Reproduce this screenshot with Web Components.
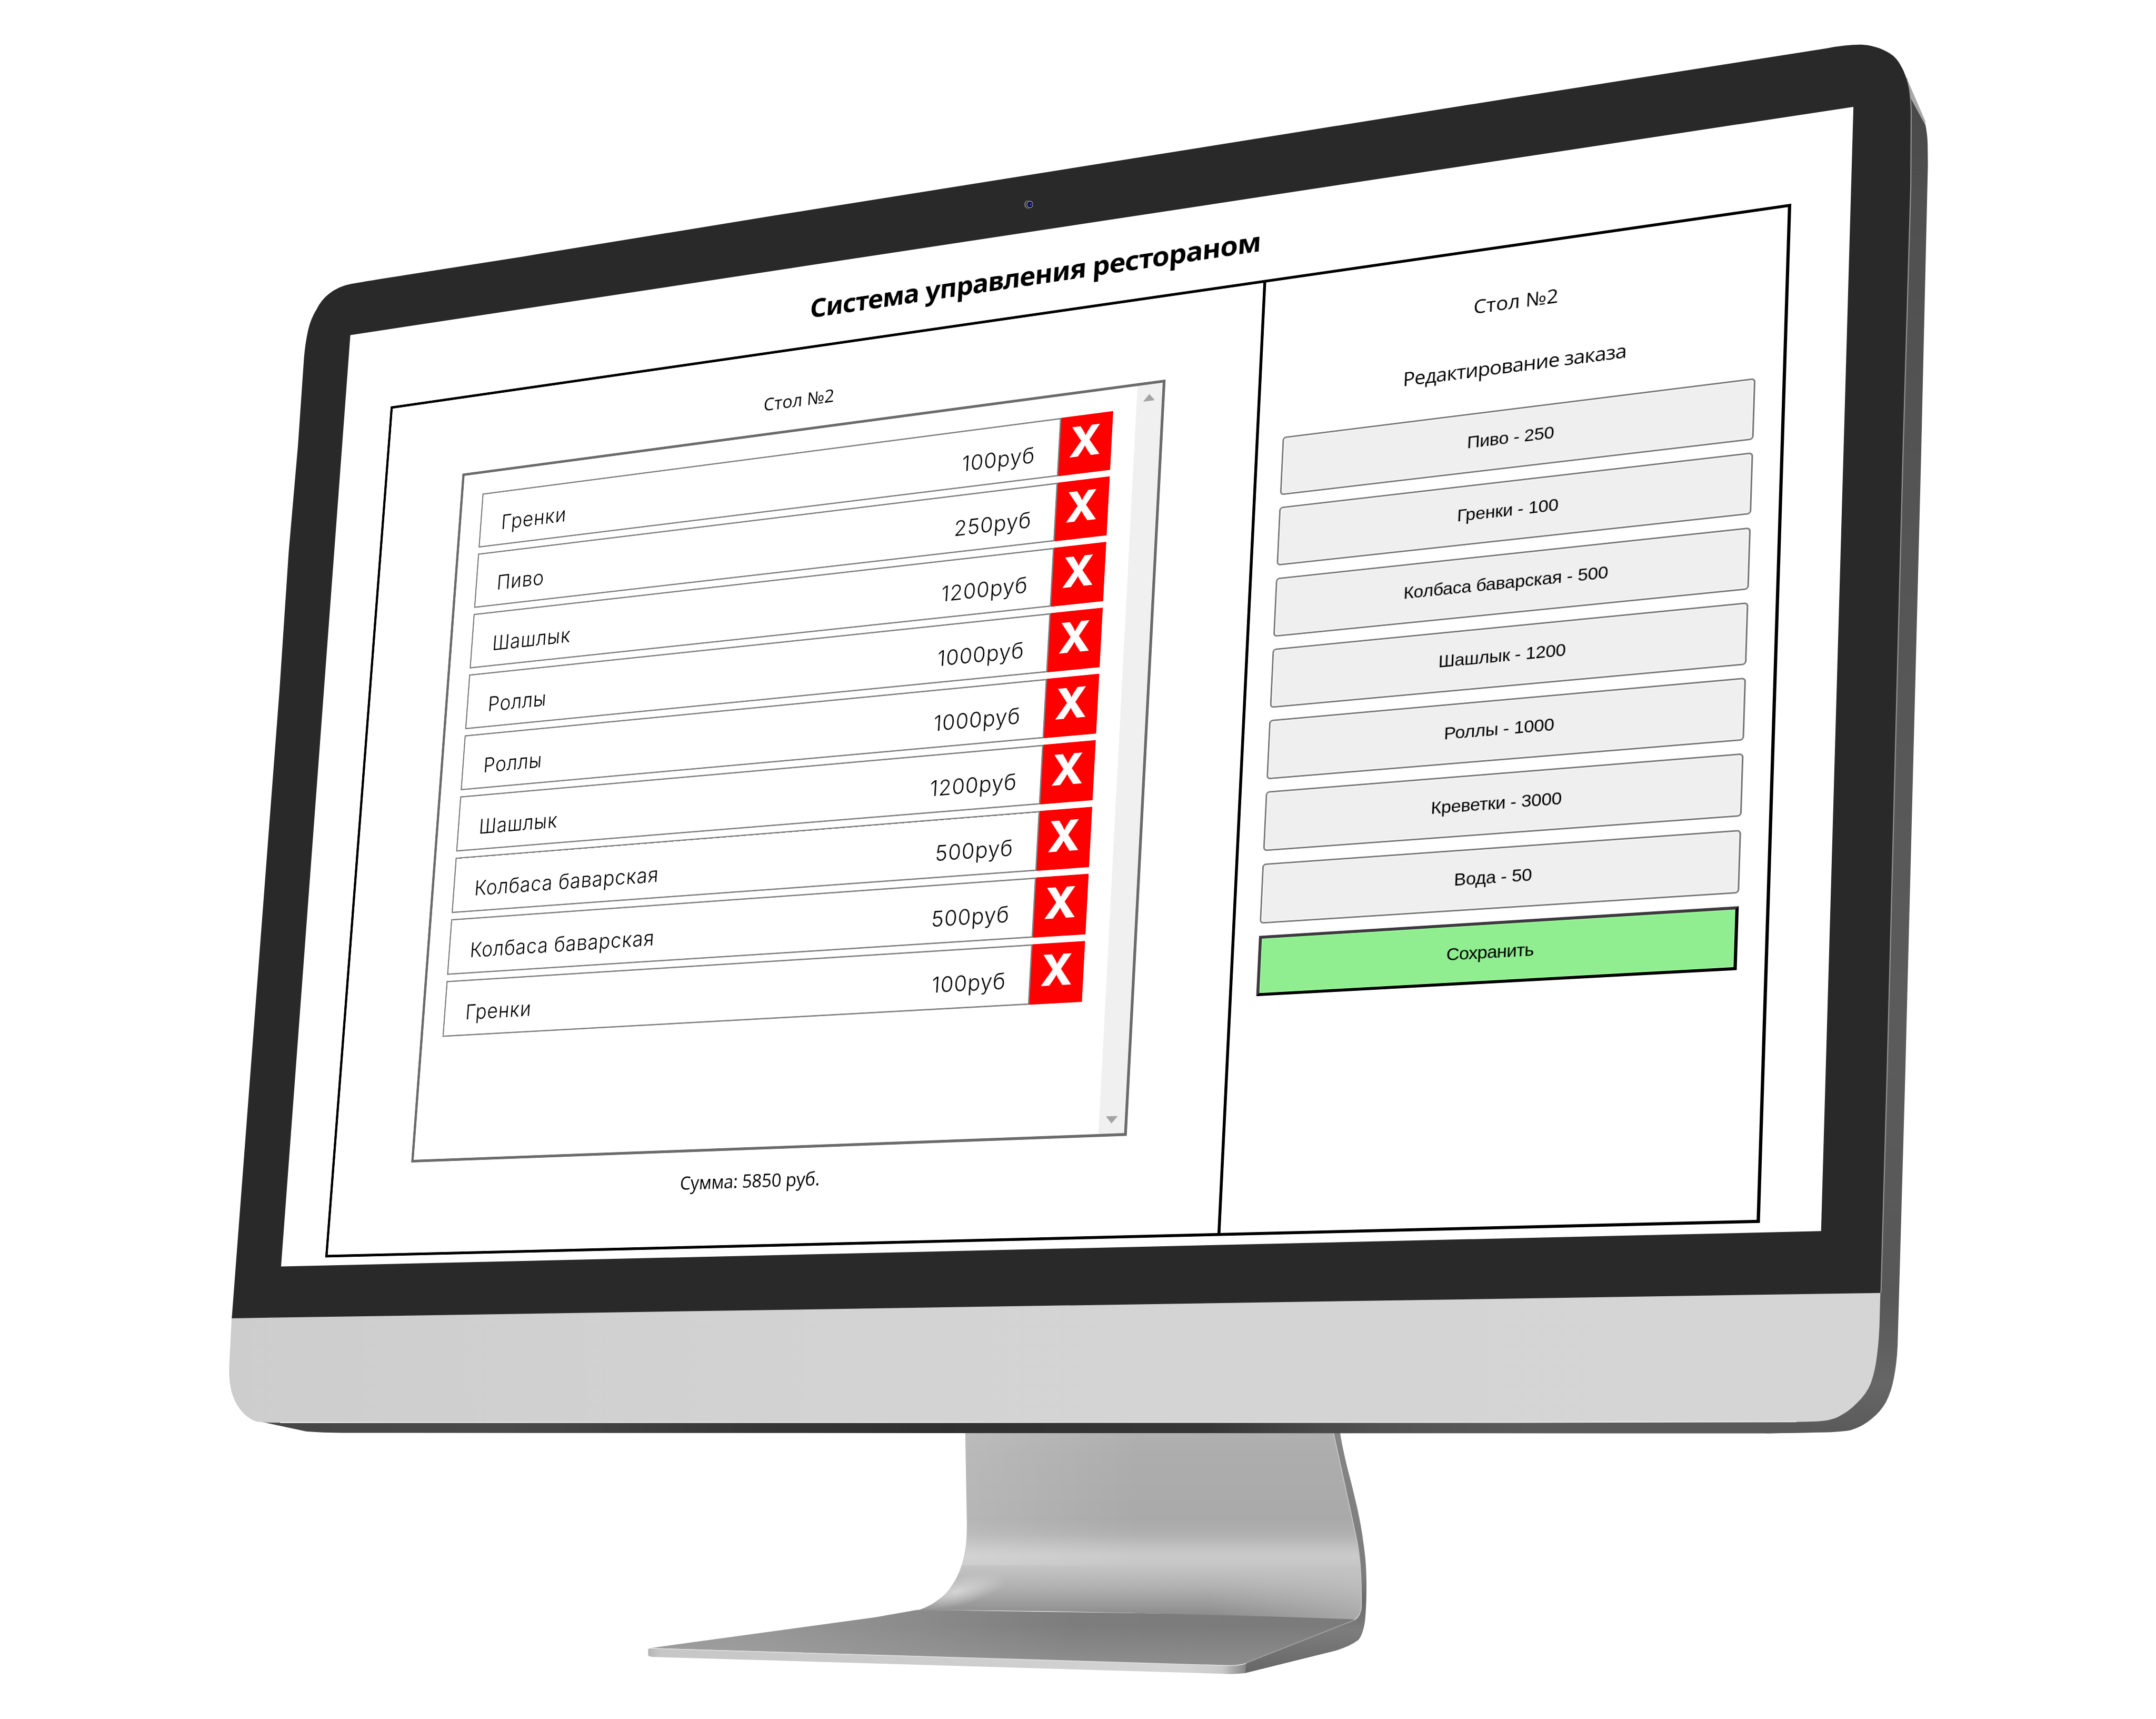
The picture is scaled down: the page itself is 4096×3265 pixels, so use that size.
<!DOCTYPE html>
<html lang="ru">
<head>
<meta charset="utf-8">
<title>Система управления рестораном</title>
<style>
  html, body { margin: 0; background: #fff; }
  body { width: 4096px; height: 3265px; overflow: hidden; }
</style>
</head>
<body>
<monitor-scene>
  <monitor-device slot="device"></monitor-device>
  <perspective-plane slot="screen">
    <restaurant-app heading="Система управления рестораном">
      <order-panel slot="main" heading="Стол №2" total="Сумма: 5850 руб.">
        <order-row price="100руб">Гренки</order-row>
        <order-row price="250руб">Пиво</order-row>
        <order-row price="1200руб">Шашлык</order-row>
        <order-row price="1000руб">Роллы</order-row>
        <order-row price="1000руб">Роллы</order-row>
        <order-row price="1200руб">Шашлык</order-row>
        <order-row price="500руб">Колбаса баварская</order-row>
        <order-row price="500руб">Колбаса баварская</order-row>
        <order-row price="100руб">Гренки</order-row>
      </order-panel>
      <edit-panel slot="side" heading="Стол №2" subheading="Редактирование заказа">
        <menu-button>Пиво - 250</menu-button>
        <menu-button>Гренки - 100</menu-button>
        <menu-button>Колбаса баварская - 500</menu-button>
        <menu-button>Шашлык - 1200</menu-button>
        <menu-button>Роллы - 1000</menu-button>
        <menu-button>Креветки - 3000</menu-button>
        <menu-button>Вода - 50</menu-button>
        <menu-button primary>Сохранить</menu-button>
      </edit-panel>
    </restaurant-app>
  </perspective-plane>
</monitor-scene>

<script>
class Base extends HTMLElement {
  constructor() {
    super();
    this.attachShadow({ mode: 'open' }).innerHTML = this.view();
  }
  attr(name) { return this.getAttribute(name) || ''; }
}

customElements.define('monitor-scene', class extends Base {
  view() {
    return `<style>
      :host { display: grid; width: 4096px; height: 3265px; overflow: hidden; }
      ::slotted(*) { grid-area: 1 / 1; place-self: start; }
    </style><slot name="device"></slot><slot name="screen"></slot>`;
  }
});

customElements.define('monitor-device', class extends Base {
  view() {
    return `<style>
      :host { display: block; width: 4096px; height: 3265px; }
      svg { display: block; width: 100%; height: 100%; }
    </style>
    <svg viewBox="0 0 5000 3986" preserveAspectRatio="none" aria-hidden="true">
      <defs>
        <linearGradient id="neck" gradientUnits="userSpaceOnUse" x1="0" y1="3324" x2="0" y2="3765">
          <stop offset="0" stop-color="#b0b0b0"/><stop offset=".1" stop-color="#adadad"/>
          <stop offset=".45" stop-color="#a9a9a9"/><stop offset=".53" stop-color="#b0b0b0"/>
          <stop offset=".6" stop-color="#c2c2c2"/><stop offset=".645" stop-color="#cacaca"/>
          <stop offset=".69" stop-color="#c6c6c6"/><stop offset=".8" stop-color="#b2b2b2"/>
          <stop offset=".88" stop-color="#9f9f9f"/><stop offset=".93" stop-color="#929292"/><stop offset="1" stop-color="#858585"/>
        </linearGradient>
        <linearGradient id="neckLight" gradientUnits="userSpaceOnUse" x1="2238" y1="0" x2="2640" y2="0">
          <stop offset="0" stop-color="#fff" stop-opacity=".15"/><stop offset="1" stop-color="#fff" stop-opacity="0"/>
        </linearGradient>
        <linearGradient id="neckRight" gradientUnits="userSpaceOnUse" x1="2800" y1="3700" x2="3160" y2="3690">
          <stop offset="0" stop-color="#c4c4c4" stop-opacity="0"/><stop offset="1" stop-color="#c4c4c4" stop-opacity=".55"/>
        </linearGradient>
        <linearGradient id="foot" gradientUnits="userSpaceOnUse" x1="1700" y1="3800" x2="2900" y2="3770">
          <stop offset="0" stop-color="#989898"/><stop offset=".35" stop-color="#8b8b8b"/>
          <stop offset=".65" stop-color="#7d7d7d"/><stop offset="1" stop-color="#7b7b7b"/>
        </linearGradient>
        <linearGradient id="footLight" gradientUnits="userSpaceOnUse" x1="0" y1="3770" x2="0" y2="3865">
          <stop offset="0" stop-color="#aaa" stop-opacity="0"/><stop offset="1" stop-color="#aaa" stop-opacity=".4"/>
        </linearGradient>
        <radialGradient id="glow" gradientUnits="userSpaceOnUse" cx="0" cy="0" r="1" gradientTransform="translate(2220 3690) rotate(-14) scale(115 34)">
          <stop offset="0" stop-color="#dcdcdc" stop-opacity=".85"/><stop offset="1" stop-color="#dcdcdc" stop-opacity="0"/>
        </radialGradient>
        <linearGradient id="strip" gradientUnits="userSpaceOnUse" x1="0" y1="3324" x2="0" y2="3880">
          <stop offset="0" stop-color="#858585"/><stop offset=".6" stop-color="#7c7c7c"/>
          <stop offset=".7" stop-color="#6a6a6a"/><stop offset=".82" stop-color="#7d7d7d"/><stop offset="1" stop-color="#666"/>
        </linearGradient>
        <linearGradient id="footEdge" gradientUnits="userSpaceOnUse" x1="1503" y1="0" x2="2890" y2="0">
          <stop offset="0" stop-color="#b5b5b5"/><stop offset=".02" stop-color="#c6c6c6"/>
          <stop offset=".9" stop-color="#d3d3d3"/><stop offset=".96" stop-color="#c9c9c9"/><stop offset="1" stop-color="#858585"/>
        </linearGradient>
        <linearGradient id="under" gradientUnits="userSpaceOnUse" x1="600" y1="0" x2="4400" y2="0">
          <stop offset="0" stop-color="#454545"/><stop offset=".15" stop-color="#494949"/>
          <stop offset=".3" stop-color="#363636"/><stop offset=".42" stop-color="#303030"/>
          <stop offset=".58" stop-color="#363636"/><stop offset=".68" stop-color="#515151"/><stop offset=".78" stop-color="#5a5a5a"/>
          <stop offset="1" stop-color="#5a5a5a"/>
        </linearGradient>
        <linearGradient id="side" gradientUnits="userSpaceOnUse" x1="0" y1="180" x2="0" y2="3320">
          <stop offset="0" stop-color="#474747"/><stop offset=".1" stop-color="#505050"/>
          <stop offset=".7" stop-color="#5b5b5b"/><stop offset=".9" stop-color="#575757"/>
          <stop offset=".965" stop-color="#666"/><stop offset="1" stop-color="#5a5a5a"/>
        </linearGradient>
        <linearGradient id="chin" gradientUnits="userSpaceOnUse" x1="532" y1="3200" x2="4360" y2="3100">
          <stop offset="0" stop-color="#cdcdcd"/><stop offset=".4" stop-color="#d3d3d3"/><stop offset="1" stop-color="#d5d5d5"/>
        </linearGradient>
      </defs>

      <!-- stand -->
      <path fill="url(#strip)" d="M3080 3318 L3107 3318 C3118 3385 3130 3420 3142 3473 C3151 3510 3157 3540 3161 3571 C3167 3610 3169 3640 3169 3674 Q3169 3730 3165 3763 Q3160 3792 3150 3803 Q3130 3818 3096 3828 L2888 3879.4 L2850 3870 Z"/>
      <path fill="url(#foot)" d="M1509 3821.4 L2030 3750 L2127 3733 L3148 3748 Q3142 3760 3115 3768 L2890 3856 Q2875 3863 2842 3862 Z"/>
      <path fill="url(#footLight)" d="M1509 3821.4 L2030 3750 L2127 3733 L3148 3748 Q3142 3760 3115 3768 L2890 3856 Q2875 3863 2842 3862 Z"/>
      <path fill="url(#neck)" d="M2238.5 3318 L2242 3518 Q2243 3560 2239.7 3585 Q2236 3610 2230 3629.5 Q2221 3658 2206 3678.6 Q2194 3698 2175.5 3709.8 Q2155 3726 2127 3734.4 C2400 3733 2750 3742 3146 3755 Q3156 3745 3157 3727.7 Q3158 3680 3154.6 3629.5 Q3151 3590 3144.8 3562.5 L3091.5 3318 Z"/>
      <path fill="url(#neckLight)" d="M2238.5 3318 L2242 3518 Q2243 3560 2239.7 3585 Q2236 3610 2230 3629.5 L2700 3630 L2700 3318 Z"/>
      <path fill="url(#neckRight)" d="M2750 3640 L3155 3640 Q3158 3690 3157 3727.7 Q3156 3745 3146 3755 L2750 3741 Z"/>
      <path fill="url(#glow)" d="M2243 3600 Q2236 3610 2230 3629.5 Q2221 3658 2206 3678.6 Q2194 3698 2175.5 3709.8 Q2155 3726 2127 3734.4 L2400 3733 L2400 3600 Z"/>
      <path fill="none" stroke="#c9c9c9" stroke-width="2" d="M3091.5 3318 L3144.8 3562.5 Q3151 3590 3154.6 3629.5 Q3158 3680 3157 3727.7 Q3156 3745 3140 3757"/>
      <path fill="none" stroke="#a5a5a5" stroke-width="2" d="M3140 3757 L2890 3856"/>
      <path fill="url(#footEdge)" d="M1503 3824 Q1506 3820 1530 3823 L2842 3862 Q2875 3863 2890 3857 L2888 3879.4 Q2860 3883 2820 3880.6 L1521 3842.4 Q1503 3842 1503 3838 Z"/>
      <path fill="none" stroke="#dedede" stroke-width="2" d="M1509 3822 L1530 3823 L2842 3862 Q2875 3863 2890 3857"/>

      <!-- side of the housing -->
      <path fill="url(#side)" d="M4418 175 L4464.6 286 Q4470 310 4470.5 337 L4471 382 L4455.5 1050 L4418.3 2500 L4400.8 3120 Q4399 3160 4392.3 3194.5 Q4387 3225 4373.4 3251.9 Q4362 3272 4341.8 3289 Q4320 3308 4292.7 3316.2 Q4275 3320 4236.6 3321.4 L4096 3323.7 L4096 3200 L4300 1000 Z"/>
      <path fill="#a9a9a9" d="M4418 172 L4464.6 280 L4466 292 L4428 222 Z"/>
      <path fill="url(#under)" d="M590 3290 L607 3297 L709.8 3319 Q740 3322 812.5 3322.5 L4096 3323.7 L4200 3322 L4200 3250 L620 3250 Z"/>

      <!-- front -->
      <path fill="url(#chin)" d="M537.5 3050 L532.5 3148.6 Q530.5 3180 532 3194.5 Q533 3215 539.3 3234.7 Q547 3258 562.5 3274.9 Q578 3291 593.7 3296 Q605 3298.8 650 3299 L3500 3298.4 L4166 3297 Q4210 3297 4229.6 3294.4 Q4245 3293 4261 3286.4 Q4287 3274 4306.8 3253 Q4328 3233 4338 3208.9 Q4348 3182 4352.3 3148.6 Q4357 3115 4358.7 3074 L4361 2990 Z"/>
      <path fill="none" stroke="#ececec" stroke-width="2.5" d="M650 3298.5 L3500 3298 L4166 3296.5"/>
      <path fill="none" stroke="#8f8f8f" stroke-width="3.5" d="M4421 181 Q4431 215 4432 260 L4431 433 L4413 1050 L4375.8 2500 L4361.8 2998"/>
      <path fill="#292929" d="M537.5 3056.8 L648.2 1600 L669.6 1278.7 L691 1033 L705 830 Q708 795 714.3 766.6 Q720 740 734 717.5 Q746 694 763.4 681 Q784 664 812.5 658.5 Q860 650 928.6 639.6 L1214 594.7 L1794.6 500 L3500 228 L4236.6 111.9 Q4285 103 4317 103.6 Q4341 105 4359 112 Q4379 120 4391 129.7 Q4402 140 4408 152 Q4416 165 4420.4 180.7 Q4425 194 4427.4 209.4 Q4431 235 4430.9 260.5 L4430 432.7 L4412 1050 L4374.8 2500 L4360.8 2998 Z"/>
      <polygon fill="#fff" points="812.5,777 4298.3,247.7 4223.3,2854.7 651.8,2936.8"/>

      <!-- camera -->
      <ellipse cx="2386" cy="474" rx="10.5" ry="10.5" fill="#77777c"/>
      <ellipse cx="2388.2" cy="474" rx="9.6" ry="10" fill="#17171c"/>
      <ellipse cx="2388.5" cy="474" rx="7" ry="7.8" fill="none" stroke="#b9b9c4" stroke-width="1.4"/>
      <ellipse cx="2389" cy="474" rx="5.4" ry="6.4" fill="#090c38"/>
      <ellipse cx="2390" cy="474" rx="2.6" ry="3.4" fill="#1c37c4"/>
    </svg>`;
  }
});

/* Projects its flat content onto the tilted glass: the framed rectangle of the
   content lands on the four given corners. The padding keeps the frame's
   border off the edge of the transformed layer. */
customElements.define('perspective-plane', class extends Base {
  view() {
    return `<style>
      :host { display: block; width: 3150px; height: 2205px; transform-origin: 0 0; }
      div { zoom: 2.5; padding: 0 12px 12px; }
    </style><div><slot></slot></div>`;
  }
  connectedCallback() {
    const scale = 0.8192, k = 2.5, W = 1236 * k, H = 800 * k, top = 70 * k, left = 12 * k;
    const [[x0, y0], [x1, y1], [x2, y2], [x3, y3]] =
      [[906.0, 942.4], [4155.6, 472.4], [4083.4, 2836.8], [754.2, 2916]];
    const sx = x0 - x1 + x2 - x3, sy = y0 - y1 + y2 - y3;
    const ax = x1 - x2, ay = y1 - y2, bx = x3 - x2, by = y3 - y2;
    const den = ax * by - bx * ay;
    const g = (sx * by - bx * sy) / den, h = (ax * sy - sx * ay) / den;
    const a = (x1 - x0 + g * x1) / W, b = (x3 - x0 + h * x3) / H;
    const d = (y1 - y0 + g * y1) / W, e = (y3 - y0 + h * y3) / H;
    const p = g / W, q = h / H;
    const m = [a * scale, d * scale, 0, p,
               b * scale, e * scale, 0, q,
               0, 0, 1, 0,
               (x0 - a * left - b * top) * scale, (y0 - d * left - e * top) * scale, 0,
               1 - p * left - q * top];
    this.style.transform = `matrix3d(${m.map(n => n.toFixed(12)).join(',')})`;
  }
});

customElements.define('restaurant-app', class extends Base {
  view() {
    return `<style>
      :host { display: flex; flex-direction: column; width: 1236px; height: 870px;
              font-family: "Open Sans", "Noto Sans", sans-serif; color: #000; }
      h1 { margin: 0; height: 70px; box-sizing: border-box; padding: 18.7px 1.5px 0 0; text-align: center;
           font: bold 24px/33px "Noto Sans", "Open Sans", sans-serif; letter-spacing: -.46px; }
      main { display: flex; box-sizing: border-box; height: 800px; border: 2.4px solid #000; }
      ::slotted([slot=main]) { flex: none; width: 821.4px; }
      ::slotted([slot=side]) { flex: 1; }
    </style>
    <h1>${this.attr('heading')}</h1>
    <main><slot name="main"></slot><slot name="side"></slot></main>`;
  }
});

customElements.define('order-panel', class extends Base {
  view() {
    return `<style>
      :host { display: flex; flex-direction: column; align-items: center; gap: 15.4px;
              box-sizing: border-box; padding-top: 34.9px; border-right: 2.4px solid #000; font-size: 16px; line-height: 22px; }
      .box { display: flex; box-sizing: border-box; width: 661.2px; height: 640.9px; border: 2.4px solid #6b6b6b; padding-right: .4px; }
      .rows { flex: 1; display: flex; flex-direction: column; gap: 5.6px; padding: 19.2px 20.2px 0 20px; }
      .bar { width: 21.2px; background: #f0f0f0; display: flex; flex-direction: column; justify-content: space-between;
             align-items: center; box-sizing: border-box; padding: 8.6px 0; }
      svg { width: 10px; height: 6px; display: block; }
      .name { letter-spacing: .1px; padding-right: 1px; }
      .sum { letter-spacing: -.1px; padding-right: 1px; }
    </style>
    <div class="name">${this.attr('heading')}</div>
    <div class="box">
      <div class="rows"><slot></slot></div>
      <div class="bar">
        <svg viewBox="0 0 10 6"><path d="M5 0L10 6H0Z" fill="#a3a3a3"/></svg>
        <svg viewBox="0 0 10 6"><path d="M5 6L10 0H0Z" fill="#a3a3a3"/></svg>
      </div>
    </div>
    <div class="sum">${this.attr('total')}</div>`;
  }
});

customElements.define('order-row', class extends Base {
  view() {
    return `<style>
      :host { display: flex; height: 51.2px; }
      .body { flex: 1; display: flex; justify-content: space-between; box-sizing: border-box;
              border: 1.2px solid #808080; padding: 16.5px 20.4px 0 20.3px;
              font: 300 18.6px/24px Inter, "Open Sans", sans-serif; letter-spacing: .48px; color: #000; }
      .del { width: 45px; background: #f00; color: #fff; text-align: center; box-sizing: border-box; padding: 5px 1px 0 0;
             font: 800 36.5px/36px Inter, "Open Sans", sans-serif; }
    </style>
    <div class="body"><span><slot></slot></span><span>${this.attr('price')}</span></div>
    <div class="del">X</div>`;
  }
});

customElements.define('edit-panel', class extends Base {
  view() {
    return `<style>
      :host { display: flex; flex-direction: column; align-items: center; padding-top: 34.9px; font-size: 16px; line-height: 22px; }
      .name { letter-spacing: .1px; padding-right: 1px; }
      .sub { margin-top: 31px; letter-spacing: -.43px; padding-right: 1px; }
      .list { display: flex; flex-direction: column; gap: 10.1px; margin-top: 25.3px; width: 369.6px; }
    </style>
    <div class="name">${this.attr('heading')}</div>
    <div class="sub">${this.attr('subheading')}</div>
    <div class="list"><slot></slot></div>`;
  }
});

customElements.define('menu-button', class extends Base {
  view() {
    return `<style>
      :host { display: flex; align-items: center; justify-content: center; box-sizing: border-box; height: 49.6px;
              border: 1.2px solid #767676; border-radius: 3px; background: #efefef; box-shadow: inset 0 0 0 .7px #fafafa;
              padding: 0 1px 1.4px 0;
              font: 14.1px/16px "Liberation Sans", Arial, sans-serif; letter-spacing: -.12px; color: #000; }
      :host([primary]) { border: 2.4px solid; border-color: #3f3840 #000 #000 #3f3840; border-radius: 0;
              background: #90ee90; box-shadow: inset 0 0 0 .8px #98fb98; letter-spacing: -.3px; padding-bottom: 1px; }
    </style><slot></slot>`;
  }
});
</script>
</body>
</html>
